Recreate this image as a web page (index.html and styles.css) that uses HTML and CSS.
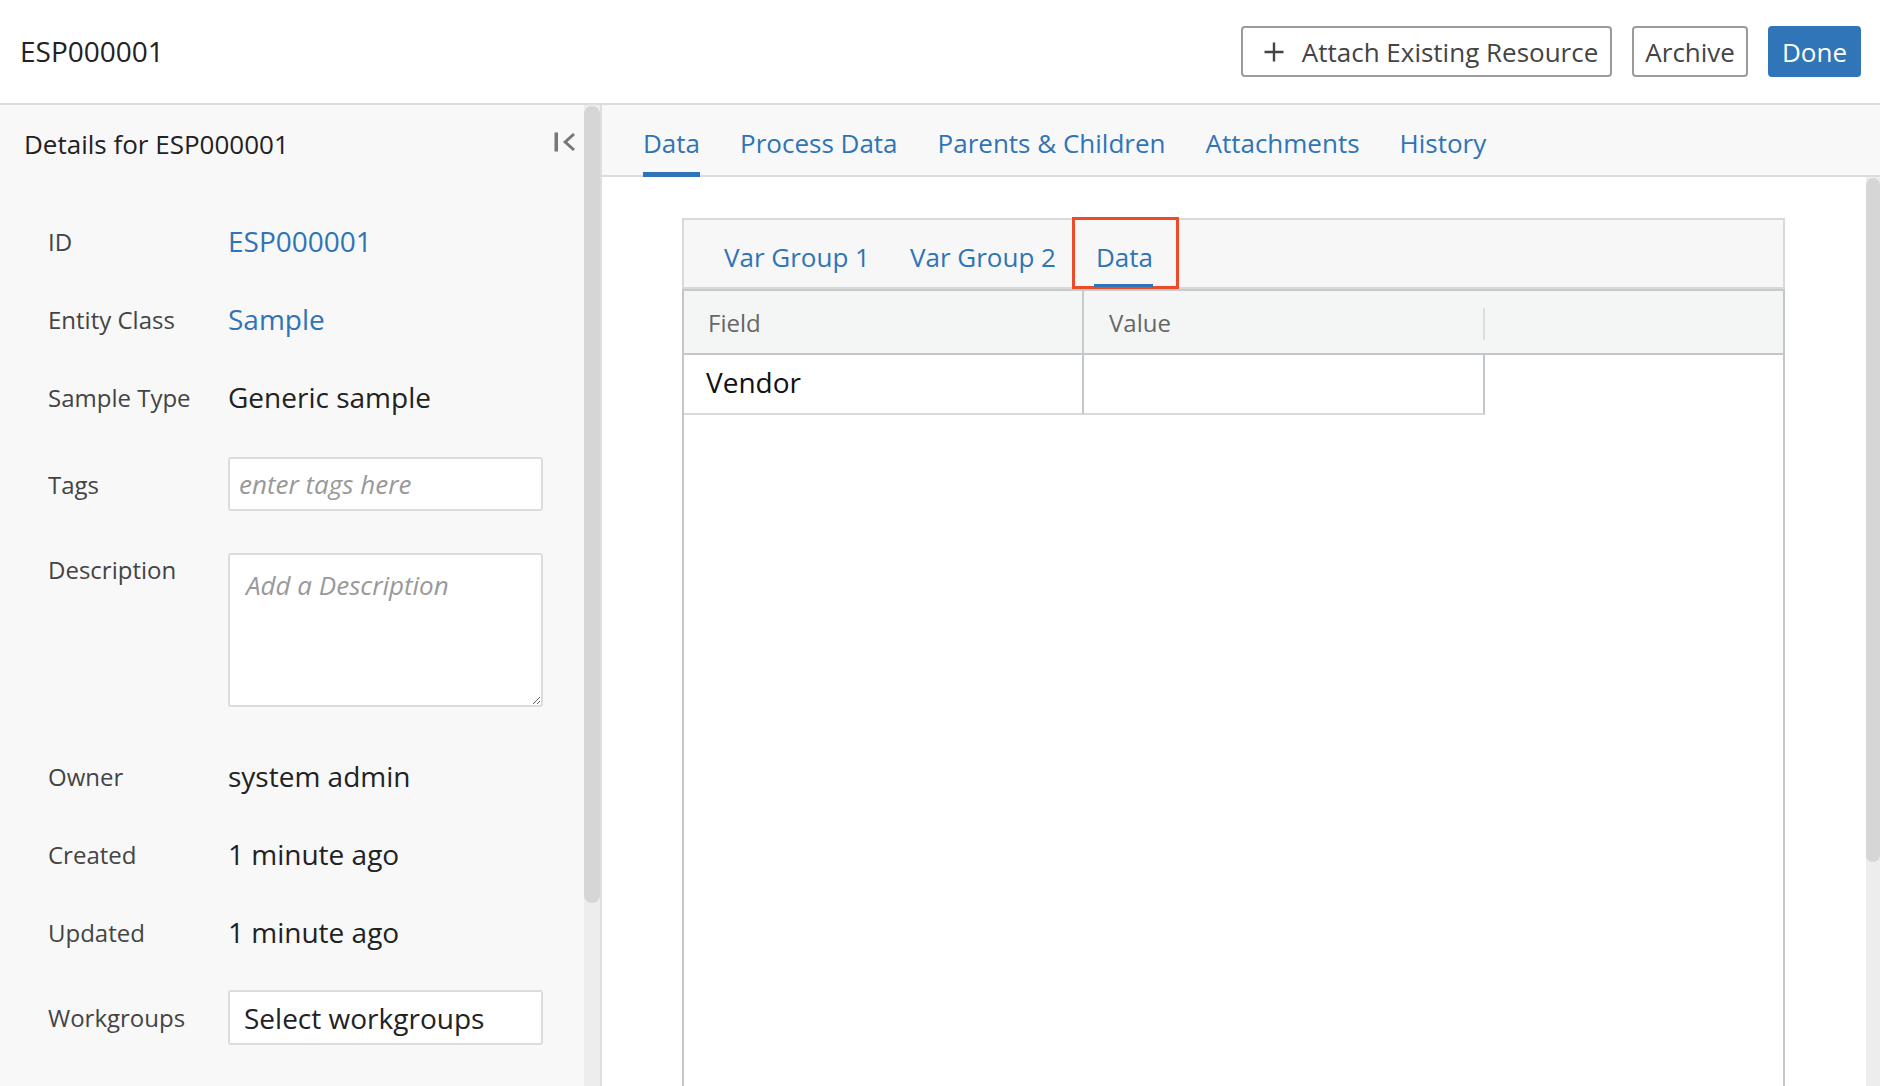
FILE: index.html
```html
<!DOCTYPE html>
<html lang="en">
<head>
<meta charset="utf-8">
<title>ESP000001</title>
<link rel="stylesheet" href="styles.css">
</head>
<body>
<div class="app">
  <header class="topbar">
    <div class="topbar-title">ESP000001</div>
    <div class="actions">
      <button class="btn btn-attach" type="button">
        <svg class="plus" width="22" height="22" viewBox="0 0 22 22" aria-hidden="true"><path d="M11 1.5V20.5M1.5 11H20.5" stroke="#444" stroke-width="2.4" fill="none"/></svg>
        <span>Attach Existing Resource</span>
      </button>
      <button class="btn" type="button">Archive</button>
      <button class="btn btn-primary" type="button">Done</button>
    </div>
  </header>
  <div class="workspace">
    <aside class="sidebar">
      <div class="side-main">
        <div class="side-head">
          <div class="side-title">Details for ESP000001</div>
          <svg class="collapse" width="22" height="22" viewBox="0 0 22 22" aria-hidden="true"><rect x="0.5" y="1.5" width="3.5" height="19" fill="#777"/><path d="M20 3L11.2 11L20 19" stroke="#777" stroke-width="3" fill="none"/></svg>
        </div>
        <div class="props">
          <div class="prop">
            <div class="prop-label">ID</div>
            <div class="prop-value link">ESP000001</div>
          </div>
          <div class="prop">
            <div class="prop-label">Entity Class</div>
            <div class="prop-value link">Sample</div>
          </div>
          <div class="prop">
            <div class="prop-label">Sample Type</div>
            <div class="prop-value">Generic sample</div>
          </div>
          <div class="prop prop-tags">
            <div class="prop-label">Tags</div>
            <input class="field-input" type="text" placeholder="enter tags here">
          </div>
          <div class="prop prop-desc">
            <div class="prop-label">Description</div>
            <textarea class="field-area" placeholder="Add a Description"></textarea>
          </div>
          <div class="prop">
            <div class="prop-label">Owner</div>
            <div class="prop-value">system admin</div>
          </div>
          <div class="prop">
            <div class="prop-label">Created</div>
            <div class="prop-value">1 minute ago</div>
          </div>
          <div class="prop">
            <div class="prop-label">Updated</div>
            <div class="prop-value">1 minute ago</div>
          </div>
          <div class="prop prop-wg">
            <div class="prop-label">Workgroups</div>
            <div class="field-select">Select workgroups</div>
          </div>
        </div>
      </div>
      <div class="scrolltrack side-track"><div class="thumb side-thumb"></div></div>
    </aside>
    <main class="main">
      <nav class="tabs">
        <div class="tab active">Data</div>
        <div class="tab">Process Data</div>
        <div class="tab">Parents &amp; Children</div>
        <div class="tab">Attachments</div>
        <div class="tab">History</div>
      </nav>
      <div class="content">
        <div class="content-inner">
          <div class="card">
            <div class="vtabs">
              <div class="vtab">Var Group 1</div>
              <div class="vtab">Var Group 2</div>
              <div class="vtab active highlighted">Data</div>
            </div>
            <div class="grid">
              <div class="th th-field">Field</div>
              <div class="th th-value">Value</div>
              <div class="th th-rest"></div>
              <div class="td td-field">Vendor</div>
              <div class="td td-value"></div>
              <div class="td-rest"></div>
            </div>
          </div>
        </div>
        <div class="scrolltrack main-track"><div class="thumb main-thumb"></div></div>
      </div>
    </main>
  </div>
</div>
</body>
</html>
```

FILE: styles.css
```css
html, body {
  margin: 0;
  padding: 0;
  height: 100%;
  overflow: hidden;
  background: #fff;
  font-family: "Open Sans", "Liberation Sans", sans-serif;
}

.app {
  display: flex;
  flex-direction: column;
  height: 100vh;
}

/* Top bar */
.topbar {
  flex: none;
  height: 105px;
  box-sizing: border-box;
  border-bottom: 2px solid #dcdcdc;
  display: flex;
  align-items: center;
  justify-content: space-between;
  padding: 0 19px 0 20px;
}

.topbar-title {
  font-size: 28px;
  color: #222;
  margin-top: -2px;
}

.actions {
  display: flex;
  gap: 20px;
}

.btn {
  height: 51px;
  box-sizing: border-box;
  border: 2px solid #9b9b9b;
  border-radius: 4px;
  background: #fff;
  color: #444;
  font-family: "Open Sans", "Liberation Sans", sans-serif;
  font-size: 26px;
  padding: 0 11px;
  display: inline-flex;
  align-items: center;
  gap: 17px;
  cursor: pointer;
}

.btn-attach {
  padding: 0 12px 0 20px;
}

.btn-primary {
  background: #2f75b8;
  border-color: #2f75b8;
  color: #fff;
  padding: 0 12px;
}

.plus {
  flex: none;
}

/* Workspace */
.workspace {
  flex: 1;
  display: flex;
  min-height: 0;
}

.sidebar {
  flex: none;
  width: 602px;
  box-sizing: border-box;
  display: flex;
  background: #f8f8f8;
  border-right: 2px solid #dedede;
}

.side-main {
  flex: 1;
  min-width: 0;
}

.side-head {
  height: 78px;
  display: flex;
  align-items: center;
  justify-content: space-between;
  padding: 0 8px 0 24px;
}

.side-title {
  font-size: 26px;
  color: #222;
}

.collapse {
  flex: none;
  margin-bottom: 5px;
}

.props {
  padding: 19px 0 0 48px;
}

.prop {
  display: grid;
  grid-template-columns: 180px 315px;
  align-items: center;
  min-height: 78px;
}

.prop-label {
  font-size: 24px;
  color: #444;
}

.prop-value {
  font-size: 28px;
  color: #222;
}

.link {
  color: #2f74b7;
}

.prop-tags {
  padding: 21px 0;
  min-height: 0;
}

.prop-desc {
  padding: 21px 0 30px;
  min-height: 0;
  align-items: start;
}

.prop-desc .prop-label {
  line-height: 34px;
}

.prop-wg {
  padding-top: 19px;
  min-height: 0;
}

.field-input,
.field-area,
.field-select {
  box-sizing: border-box;
  width: 315px;
  background: #fff;
  border: 2px solid #dcdcdc;
  border-radius: 3px;
  font-family: "Open Sans", "Liberation Sans", sans-serif;
  margin: 0;
  outline: none;
}

.field-input {
  height: 54px;
  padding: 0 9px;
  font-size: 26px;
}

.field-area {
  height: 154px;
  padding: 13px 16px;
  font-size: 26px;
  line-height: 34px;
  resize: vertical;
  display: block;
}

.field-input::placeholder,
.field-area::placeholder {
  color: #999;
  font-style: italic;
  opacity: 1;
}

.field-select {
  height: 55px;
  padding: 0 14px;
  font-size: 28px;
  color: #222;
  display: flex;
  align-items: center;
}

/* Scrollbars */
.scrolltrack {
  flex: none;
  background: #ededed;
}

.thumb {
  background: #d6d6d6;
}

.side-track {
  width: 16px;
}

.side-thumb {
  margin-top: 1px;
  height: 797px;
  border-radius: 8px;
}

.main-track {
  width: 14px;
}

.main-thumb {
  margin-top: 1px;
  height: 684px;
  border-radius: 7px;
}

/* Main */
.main {
  flex: 1;
  min-width: 0;
  display: flex;
  flex-direction: column;
}

.tabs {
  flex: none;
  height: 72px;
  box-sizing: border-box;
  border-bottom: 2px solid #dcdcdc;
  background: #f8f8f8;
  display: flex;
  gap: 40px;
  padding: 5px 0 0 41px;
}

.tab {
  position: relative;
  display: flex;
  align-items: center;
  font-size: 26px;
  color: #2f74b7;
}

.tab.active::after {
  content: "";
  position: absolute;
  left: 0;
  right: 0;
  bottom: -2px;
  height: 5px;
  background: #2f74b7;
}

.content {
  flex: 1;
  min-height: 0;
  display: flex;
  background: #fff;
}

.content-inner {
  flex: 1;
  min-width: 0;
  padding: 41px 81px 0 80px;
  overflow: hidden;
}

.card {
  height: 100%;
  display: flex;
  flex-direction: column;
}

.vtabs {
  flex: none;
  height: 71px;
  box-sizing: border-box;
  border: 2px solid #d9d9d9;
  background: #f7f7f7;
  display: flex;
  gap: 40px;
  padding: 6px 0 0 40px;
}

.vtab {
  position: relative;
  display: flex;
  align-items: center;
  font-size: 26px;
  color: #2f74b7;
}

.vtab.active::after {
  content: "";
  position: absolute;
  left: -2px;
  right: 0;
  bottom: 0;
  height: 3px;
  background: #2f74b7;
}

.vtab.highlighted::before {
  content: "";
  position: absolute;
  top: -9px;
  bottom: -2px;
  left: -24px;
  right: -26px;
  border: 3px solid #ee4a2a;
}

.grid {
  flex: 1;
  display: grid;
  grid-template-columns: 400px 401px 1fr;
  grid-template-rows: 64px 60px;
  align-content: start;
  border-left: 2px solid #c3c7cb;
  border-right: 2px solid #c3c7cb;
  border-top: 2px solid #c8cbce;
}

.th {
  box-sizing: border-box;
  background: #f4f6f6;
  border-bottom: 2px solid #c3c7cb;
  font-size: 24px;
  color: #666;
  display: flex;
  align-items: center;
  padding-left: 24px;
}

.th-field {
  border-right: 2px solid #c8cbce;
}

.th-value {
  position: relative;
  padding-left: 25px;
}

.th-value::after {
  content: "";
  position: absolute;
  right: 0;
  top: 17px;
  width: 2px;
  height: 32px;
  background: #dcdde3;
}

.td {
  box-sizing: border-box;
  border-bottom: 2px solid #d9d9d9;
  border-right: 2px solid #c3c7cb;
  font-size: 28px;
  color: #111;
  display: flex;
  align-items: center;
  padding: 0 0 5px 22px;
}
```
